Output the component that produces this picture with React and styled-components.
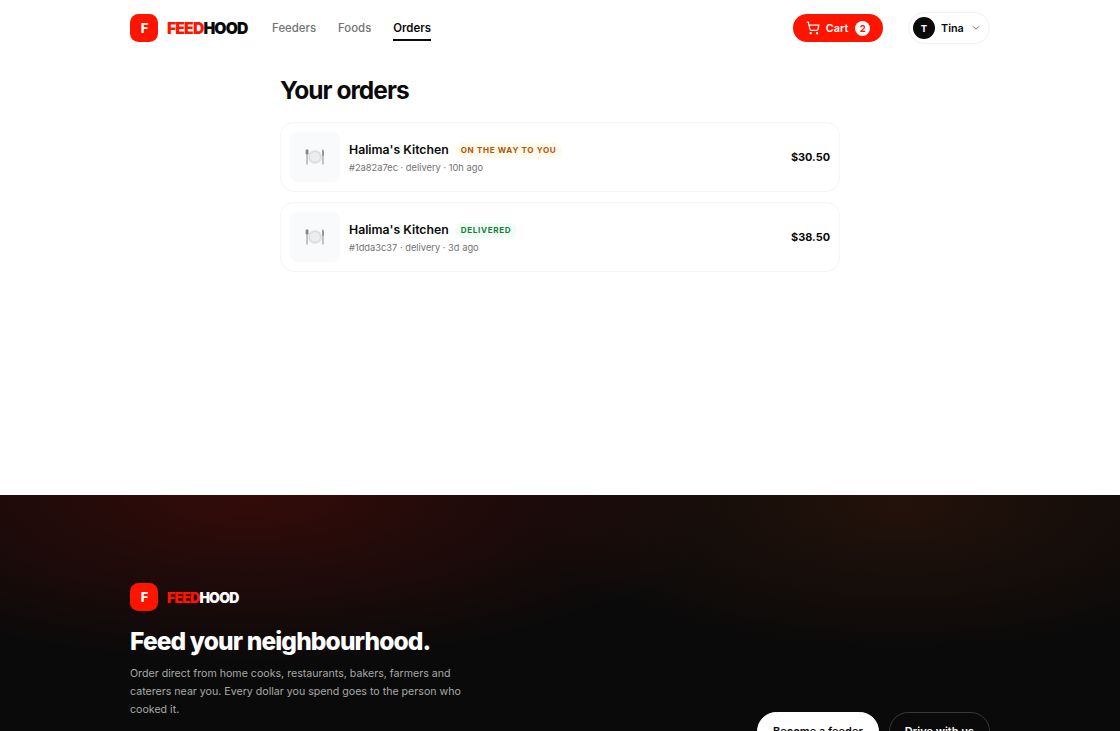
import React from 'react';
import styled, { createGlobalStyle } from 'styled-components';

const Global = createGlobalStyle`
  html, body { margin: 0; padding: 0; background: #fff; overflow: hidden; }
  body { font-family: Inter, "Liberation Sans", sans-serif; color: #0a0a0a; -webkit-font-smoothing: antialiased; }
`;

const Page = styled.div`
  height: 731px;
  overflow: hidden;
`;

const Header = styled.header`
  height: 56px;
  padding: 0 130px;
  display: flex;
  align-items: center;
  justify-content: space-between;
`;

const Left = styled.div`
  display: flex;
  align-items: center;
`;

const Brand = styled.a`
  display: flex;
  align-items: center;
  gap: 9px;
`;

const Mark = styled.span`
  width: 28px;
  height: 28px;
  border-radius: 8.5px;
  background: #ff1400;
  color: #fff;
  font-size: 13px;
  font-weight: 800;
  display: flex;
  align-items: center;
  justify-content: center;
  padding-left: 1px;
  box-sizing: border-box;
`;

const Word = styled.span`
  font-size: ${p => p.$size}px;
  font-weight: 900;
  letter-spacing: -0.055em;
  color: ${p => p.$color};
  em { font-style: normal; color: #ff1400; }
`;

const Nav = styled.nav`
  display: flex;
  gap: 22px;
  margin-left: 24.5px;
`;

const NavLink = styled.a`
  font-size: 11.4px;
  font-weight: ${p => (p.$active ? 600 : 500)};
  color: ${p => (p.$active ? '#0a0a0a' : '#737373')};
  padding: 6px 0 4px;
  border-bottom: 2px solid ${p => (p.$active ? '#0a0a0a' : 'transparent')};
`;

const Right = styled.div`
  display: flex;
  align-items: center;
  gap: 25px;
`;

const CartButton = styled.button`
  width: 90px;
  height: 28px;
  border: 0;
  border-radius: 14px;
  background: #ff1400;
  color: #fff;
  font: 600 10.8px Inter, sans-serif;
  display: flex;
  align-items: center;
  justify-content: center;
  gap: 6px;
  padding: 0;
`;

const CartCount = styled.span`
  width: 15px;
  height: 15px;
  border-radius: 50%;
  background: #fff;
  color: #ff1400;
  font-size: 9.6px;
  font-weight: 700;
  display: flex;
  align-items: center;
  justify-content: center;
  margin-left: 1px;
`;

const UserButton = styled.button`
  width: 82px;
  height: 32px;
  border: 1px solid #f0f0f0;
  border-radius: 16px;
  background: #fff;
  font: 600 10.8px Inter, sans-serif;
  color: #0a0a0a;
  display: flex;
  align-items: center;
  padding: 0 0 0 4px;
  gap: 6px;
`;

const Avatar = styled.span`
  width: 22px;
  height: 22px;
  border-radius: 50%;
  background: #0a0a0a;
  color: #fff;
  font-size: 9.6px;
  font-weight: 700;
  display: flex;
  align-items: center;
  justify-content: center;
`;

const UserName = styled.span`
  width: 24px;
  text-align: left;
`;

const Main = styled.main`
  width: 560px;
  height: 439px;
  margin: 0 auto;
  box-sizing: border-box;
  padding-top: 19px;
`;

const Title = styled.h1`
  margin: 0 0 17px;
  font-size: 24.5px;
  line-height: 30px;
  font-weight: 700;
  letter-spacing: -0.04em;
`;

const List = styled.div`
  display: flex;
  flex-direction: column;
  gap: 10px;
`;

const Card = styled.div`
  height: 70px;
  box-sizing: border-box;
  border: 1px solid #f5f5f5;
  border-radius: 14px;
  padding: 0 9px;
  display: flex;
  align-items: center;
  gap: 9px;
`;

const Thumb = styled.div`
  width: 50px;
  height: 50px;
  border-radius: 8px;
  background: #f9fafb;
  display: flex;
  align-items: center;
  justify-content: center;
  flex: none;
`;

const Info = styled.div`
  flex: 1;
  display: flex;
  flex-direction: column;
  gap: 2px;
  padding-top: 2px;
`;

const NameRow = styled.div`
  display: flex;
  align-items: center;
  gap: 6px;
`;

const Name = styled.span`
  font-size: 12.25px;
  line-height: 18px;
  font-weight: 600;
`;

const Badge = styled.span`
  height: 15px;
  padding: 0 6px;
  border-radius: 7.5px;
  background: ${p => p.$bg};
  color: ${p => p.$fg};
  font-size: 8.1px;
  font-weight: 700;
  letter-spacing: 0.08em;
  line-height: 15px;
`;

const Meta = styled.span`
  font-size: 9.3px;
  line-height: 14px;
  color: #737373;
`;

const Price = styled.span`
  font-size: 10.9px;
  font-weight: 700;
`;

const Footer = styled.footer`
  height: 400px;
  box-sizing: border-box;
  padding: 88px 130px 0;
  background:
    radial-gradient(ellipse 480px 170px at 250px 0, rgba(110, 14, 8, 0.42), transparent),
    radial-gradient(ellipse 380px 150px at 900px 10px, rgba(110, 40, 10, 0.25), transparent),
    #0a0a0a;
  color: #fff;
  display: flex;
  align-items: flex-start;
  justify-content: space-between;
`;

const Pitch = styled.div`
  width: 340px;
`;

const Tagline = styled.h2`
  margin: 14px 0 8px;
  font-size: 24.5px;
  line-height: 32px;
  font-weight: 800;
  letter-spacing: -0.035em;
  white-space: nowrap;
`;

const Blurb = styled.p`
  margin: 0;
  font-size: 10.63px;
  line-height: 18px;
  color: #a8a8a8;
`;

const Actions = styled.div`
  display: flex;
  gap: 10px;
  margin-top: 129px;
`;

const Action = styled.a`
  height: 38.5px;
  box-sizing: border-box;
  padding: 0 15px;
  border-radius: 19.25px;
  font-size: 11px;
  font-weight: 600;
  display: flex;
  align-items: center;
  background: ${p => (p.$solid ? '#fff' : 'transparent')};
  color: ${p => (p.$solid ? '#0a0a0a' : '#fff')};
  border: 1px solid ${p => (p.$solid ? '#fff' : '#3a3a3a')};
`;

const CartIcon = () => (
  <svg width="14" height="14" viewBox="0 0 24 24" fill="none" stroke="currentColor" strokeWidth="2" strokeLinecap="round" strokeLinejoin="round">
    <circle cx="8" cy="21" r="1" />
    <circle cx="19" cy="21" r="1" />
    <path d="M2.05 2.05h2l2.66 12.42a2 2 0 0 0 2 1.58h9.78a2 2 0 0 0 1.95-1.57l1.65-7.43H5.12" />
  </svg>
);

const Chevron = () => (
  <svg width="10" height="10" viewBox="0 0 24 24" fill="none" stroke="#666" strokeWidth="2.4" strokeLinecap="round" strokeLinejoin="round">
    <path d="m6 9 6 6 6-6" />
  </svg>
);

const PlateIcon = () => (
  <svg width="20" height="18" viewBox="0 0 20 18">
    <circle cx="10" cy="9" r="6.8" fill="#dcdee0" />
    <circle cx="10" cy="9" r="4.8" fill="#ecedee" />
    <rect x="1.5" y="1.5" width="1.1" height="15" rx=".5" fill="#94989c" />
    <rect x="0.6" y="1.5" width="2.9" height="5" rx="1.2" fill="#85898e" />
    <rect x="17.4" y="1.5" width="1.1" height="15" rx=".5" fill="#94989c" />
    <path d="M17.4 1.5 C18.9 2.5 19.4 5 18.5 8 H17.4 Z" fill="#85898e" />
  </svg>
);

const Logo = ({ color, size }) => (
  <Brand>
    <Mark>F</Mark>
    <Word $color={color} $size={size}><em>FEED</em>HOOD</Word>
  </Brand>
);

const orders = [
  { id: '#2a82a7ec', when: '10h ago', status: 'ON THE WAY TO YOU', bg: '#fffbeb', fg: '#b45309', total: '$30.50' },
  { id: '#1dda3c37', when: '3d ago', status: 'DELIVERED', bg: '#f0fdf4', fg: '#15803d', total: '$38.50' },
];

export default function App() {
  return (
    <Page>
      <Global />
      <Header>
        <Left>
          <Logo color="#0a0a0a" size={15.75} />
          <Nav>
            <NavLink>Feeders</NavLink>
            <NavLink>Foods</NavLink>
            <NavLink $active>Orders</NavLink>
          </Nav>
        </Left>
        <Right>
          <CartButton><CartIcon />Cart<CartCount>2</CartCount></CartButton>
          <UserButton><Avatar>T</Avatar><UserName>Tina</UserName><Chevron /></UserButton>
        </Right>
      </Header>
      <Main>
        <Title>Your orders</Title>
        <List>
          {orders.map(o => (
            <Card key={o.id}>
              <Thumb><PlateIcon /></Thumb>
              <Info>
                <NameRow>
                  <Name>Halima's Kitchen</Name>
                  <Badge $bg={o.bg} $fg={o.fg}>{o.status}</Badge>
                </NameRow>
                <Meta>{o.id} · delivery · {o.when}</Meta>
              </Info>
              <Price>{o.total}</Price>
            </Card>
          ))}
        </List>
      </Main>
      <Footer>
        <Pitch>
          <Logo color="#fff" size={14} />
          <Tagline>Feed your neighbourhood.</Tagline>
          <Blurb>Order direct from home cooks, restaurants, bakers, farmers and caterers near you. Every dollar you spend goes to the person who cooked it.</Blurb>
        </Pitch>
        <Actions>
          <Action $solid>Become a feeder</Action>
          <Action>Drive with us</Action>
        </Actions>
      </Footer>
    </Page>
  );
}
